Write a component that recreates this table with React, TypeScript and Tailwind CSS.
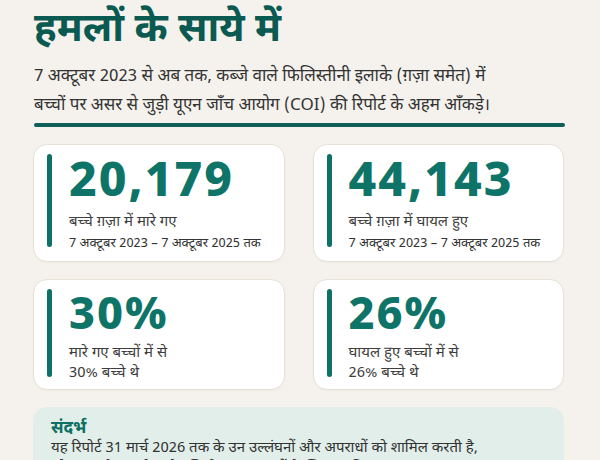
import React from "react";

type Stat = {
	value: string;
	lines: string[];
	big?: boolean;
};

const stats: Stat[] = [
	{
		value: "20,179",
		lines: ["बच्चे ग़ज़ा में मारे गए", "7 अक्टूबर 2023 – 7 अक्टूबर 2025 तक"],
		big: true,
	},
	{
		value: "44,143",
		lines: ["बच्चे ग़ज़ा में घायल हुए", "7 अक्टूबर 2023 – 7 अक्टूबर 2025 तक"],
		big: true,
	},
	{ value: "30%", lines: ["मारे गए बच्चों में से", "30% बच्चे थे"] },
	{ value: "26%", lines: ["घायल हुए बच्चों में से", "26% बच्चे थे"] },
];

function StatCard({ stat }: { stat: Stat }) {
	return (
		<div
			className={
				stat.big
					? "flex rounded-[14px] border border-[#e7e1d7] bg-white pl-[13px] pr-4 pt-[9px] pb-[7px] shadow-[0_1px_2px_rgba(0,0,0,0.03)]"
					: "flex rounded-[14px] border border-[#e7e1d7] bg-white pl-[13px] pr-4 pt-[9px] pb-[5px] shadow-[0_1px_2px_rgba(0,0,0,0.03)]"
			}
		>
			<div className="mb-[7px] w-[5px] shrink-0 rounded-full bg-[#0e7066]" />
			<div className="pl-[17px]">
				<div
					className={
						stat.big
							? "font-['Noto_Sans',sans-serif] text-[48px] font-extrabold leading-none tracking-[2px] text-[#0e7468]"
							: "font-['Noto_Sans',sans-serif] text-[45px] font-extrabold leading-none tracking-[2px] text-[#0e7468]"
					}
				>
					{stat.value}
				</div>
				{stat.big ? (
					<div className="mt-[10px]">
						<div className="text-[15px] leading-[22px] text-[#3d3d3d]">{stat.lines[0]}</div>
						<div className="text-[13px] leading-[20px] text-[#333]">{stat.lines[1]}</div>
					</div>
				) : (
					<div className="mt-[10px] text-[15px] leading-[20px] text-[#3d3d3d]">
						<div>{stat.lines[0]}</div>
						<div>{stat.lines[1]}</div>
					</div>
				)}
			</div>
		</div>
	);
}

export default function App() {
	return (
		<div className="min-h-screen overflow-hidden bg-[#f5f2ed] font-['Noto_Sans_Devanagari','Noto_Sans',sans-serif]">
			<div className="pl-[33px] pr-[36px]">
				<h1 className="mt-[7px] pl-px text-[40px] font-bold leading-[1.2] text-[#0b5a52]">
					हमलों के साये में
				</h1>
				<p className="mt-[8px] pl-px text-[17px] leading-[29px] text-[#333]">
					7 अक्टूबर 2023 से अब तक, कब्जे वाले फिलिस्तीनी इलाके (ग़ज़ा समेत) में
					<br />
					बच्चों पर असर से जुड़ी यूएन जाँच आयोग (COI) की रिपोर्ट के अहम आँकड़े।
				</p>
				<div className="mt-[2px] ml-px mr-[-1px] h-[4px] rounded-full bg-[#0f5f58]" />

				<div className="mt-[17px] grid grid-cols-2 gap-x-[28px] gap-y-[17px]">
					{stats.map((s) => (
						<StatCard key={s.value} stat={s} />
					))}
				</div>

				<div className="mt-[17px] rounded-[14px] bg-[#e2eeea] px-[18px] pt-[12px] pb-4">
					<div className="text-[17px] font-bold leading-[20px] text-[#0e6f63]">संदर्भ</div>
					<p className="text-[15px] leading-[20px] text-[#333]">
						यह रिपोर्ट 31 मार्च 2026 तक के उन उल्लंघनों और अपराधों को शामिल करती है,
						<br />
						जो ग़ज़ा और कब्जे वाले पश्चिमी तट पर बच्चों के खिलाफ किए गए।
					</p>
				</div>
			</div>
		</div>
	);
}
